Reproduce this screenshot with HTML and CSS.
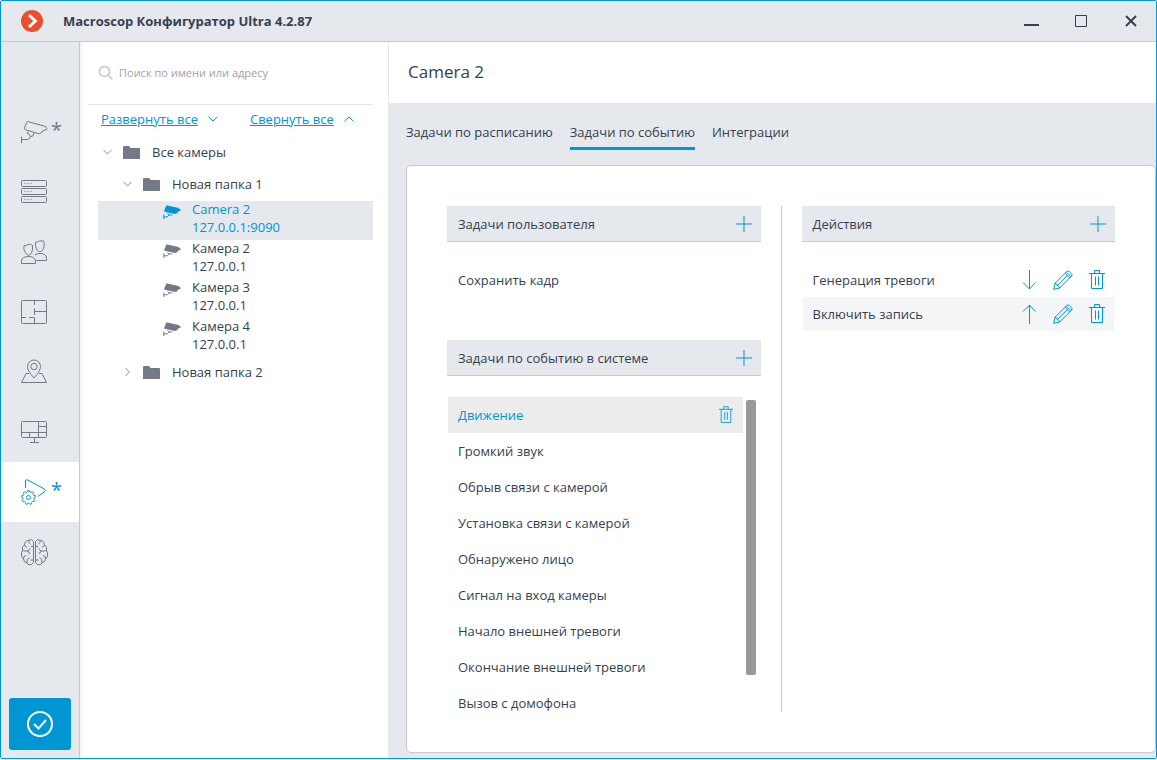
FILE: index.html
```html
<!DOCTYPE html>
<html lang="ru">
<head>
<meta charset="utf-8">
<title>Macroscop Конфигуратор Ultra 4.2.87</title>
<link rel="stylesheet" href="styles.css">
</head>
<body>
<svg class="sprite" aria-hidden="true">
  <symbol id="plus" viewBox="0 0 16 16"><path d="M8 0v16M0 8h16"/></symbol>
  <symbol id="trash" viewBox="0 0 16 20"><path d="M0 3.5h16M5.500 3.500V.5h5v3M2.500 3.500v15h11v-15M6.500 6.500v9M9.500 6.500v9"/></symbol>
  <symbol id="pencil" viewBox="0 0 20 20"><path d="M.7 19.300l1.300-6L13.800 1.500q1.200-1.200 2.500 0l2.200 2.200q1.200 1.200 0 2.500L6.700 18zM2 13.300q2 .2 2.200 2.300 2 .3 2.500 2.400M12 3.300l4.700 4.700M13.300 2l4.700 4.700M4.200 15.600L14.300 5.600"/></symbol>
  <symbol id="down" viewBox="0 0 14 20"><path d="M7.500 0v19M1 12.500L7.500 19l6-6.500"/></symbol>
  <symbol id="up" viewBox="0 0 14 20"><path d="M7.500 20V1M1 7.500L7.500 1l6 6.500"/></symbol>
  <symbol id="folder" viewBox="0 0 17 13"><path d="M0 13V1q0-1 1-1h5l1.500 2H16q1 0 1 1v10z"/></symbol>
  <symbol id="cam" viewBox="0 0 18 14"><path d="M3 1.200Q3.300.2 4.300.4L15.600 3l.7 1 1.300.6q.4 1-.5 1.500l-1.900.5-1 1.600-2.400.8-2.300-.5L1.700 6.800Q1 6.500 1.200 5.700z"/><path class="mount" d="M.8 9.500V14M.8 11.800h3.500l2-2 3 .2M4.500 8.500l1.800 1.500"/></symbol>
  <symbol id="chev-down" viewBox="0 0 10 6"><path d="M.5.7L5 5 9.500.7"/></symbol>
  <symbol id="chev-up" viewBox="0 0 10 6"><path d="M.5 5.300L5 1l4.500 4.300"/></symbol>
</svg>

<div class="window">
  <header class="titlebar">
    <svg class="logo" viewBox="0 0 22 22"><circle cx="11" cy="11" r="11"/><path d="M8 5l6.300 6L8 17"/></svg>
    <h1 class="title">Macroscop Конфигуратор Ultra 4.2.87</h1>
    <button class="win-btn" aria-label="Свернуть"><svg width="16" height="14"><path d="M1 11h15"/></svg></button>
    <button class="win-btn thin" aria-label="Развернуть"><svg width="12" height="12"><path d="M.5.5h11v11H.5z"/></svg></button>
    <button class="win-btn" aria-label="Закрыть"><svg width="12" height="12"><path d="M1 1l10 10M11 1L1 11"/></svg></button>
  </header>

  <div class="main">
    <nav class="rail">
      <button class="rail-item" aria-label="Камеры">
        <svg viewBox="0 0 28 28"><path d="M6.600 4.300q.3-.9 1.300-.7l17 4.700q1.200.3 1.400 1l.6 1.500q0 1-1 1.100l-3 .6q-.6 2-2 2.400l-2.400.8-13-4q-1.300-.4-1.100-1.500zM1.500 18.500v6.500M1.500 21.500h5.500q3-.1 3.500-3l2.500-.5 1-3M8.500 13.500l-1.500 1.700 2.500 1.300 1 2"/></svg>
        <span class="star">*</span>
      </button>
      <button class="rail-item" aria-label="Серверы">
        <svg viewBox="0 0 28 28"><rect x="1.500" y="2.500" width="25" height="6" rx="1"/><rect x="1.500" y="10.500" width="25" height="6" rx="1"/><rect x="1.500" y="18.500" width="25" height="6" rx="1"/><path d="M4.500 5.500h1m2 0h1m2 0h1M4.500 13.500h1m2 0h1m2 0h1M4.500 21.500h1m2 0h1m2 0h1"/></svg>
      </button>
      <button class="rail-item" aria-label="Пользователи">
        <svg viewBox="0 0 28 28"><path d="M1.500 25.500v-2.500q.4-4.500 7-4.500t7 4.500v2.500zM4 7.800q2 .2 4-1.400 2.500-.6 4.500.9.600 5-1 7.500-3 5-6 0-2.500-3.500-1.500-7M15.500 4.300q2.200 0 4.200-1.400 2.500-.3 4.300.6.900 5.500-1 8-3 4.500-6 .4-2.300-3.600-1.500-7.600M16.500 22.500h10v-2.500q-.4-4.500-6.500-4.500-3.200 0-5 1.500"/></svg>
      </button>
      <button class="rail-item" aria-label="Планы">
        <svg viewBox="0 0 28 28"><rect x="1.500" y="2.500" width="25" height="23" rx="1"/><path d="M14.500 2.500V7M14.500 10.500V17M14.500 13.500h12M1.500 19.500H6M9 19.500h5.500v6"/></svg>
      </button>
      <button class="rail-item" aria-label="Карты">
        <svg viewBox="0 0 28 28"><circle cx="14" cy="8.500" r="3.200"/><path d="M14 20Q7.500 13 7.500 8.500a6.500 6.500 0 0 1 13 0Q20.500 13 14 20zM9 15.500H6l-4.500 9h25l-4.500-9h-3"/></svg>
      </button>
      <button class="rail-item" aria-label="Рабочие места">
        <svg viewBox="0 0 28 28"><rect x="1.500" y="3.500" width="25" height="16" rx="1"/><path d="M18.500 3.500v16M18.500 8.500h8M1.500 14.500h25M9.500 14.500v5M14.500 19.500v5M10 24.500h9"/></svg>
      </button>
      <button class="rail-item active" aria-label="Сценарии">
        <svg viewBox="0 0 28 28"><path d="M5.500 10V3q.2-1.800 2-1.100L24.500 11q1.800 1.200.3 2.500l-7 5"/><circle cx="8.500" cy="19.500" r="2"/><path d="M7.500 14l.3-1.500h1.500l.3 1.500 1.500.5 1.200-1 1.200 1-.6 1.400.8 1.400 1.500.1.3 1.500-1.400.8-.2 1.500 1 1.200-.8 1.300-1.500-.3-1.200 1 0 1.500-1.400.5-1-1.200H8l-1 1.200-1.400-.5v-1.500l-1.200-1-1.500.3-.8-1.300 1-1.200-.2-1.500-1.400-.8.300-1.500 1.500-.1.800-1.400-.6-1.400 1.200-1 1.200 1z"/></svg>
        <span class="star">*</span>
      </button>
      <button class="rail-item" aria-label="Нейросети">
        <svg viewBox="0 0 28 28"><path d="M13.500 3.500v21q-1.500 3-4.500 2.200-1.500-.4-2-2-3.200 0-3.500-3.700Q.8 19 1.500 16q-.3-2 1-3.200Q1.500 8.500 4.500 7 5 2.500 9 2.300q3-2 4.500 1.200zM15.500 3.500v21q1.500 3 4.500 2.200 1.500-.4 2-2 3.200 0 3.500-3.700 2.700-2 2-5 .3-2-1-3.200 1-4.300-2-5.800Q24 2.500 20 2.300q-3-2-4.500 1.200zM4.500 7q.3 2 2.500 2M9 2.300q-1 2.500 1.500 3.700M10 10.500q-.5 2.500-3 2.500t-4.500-.2M7 13q2.500.5 2.500 3M3.500 21Q3 18 6 17.500M7 24.700q-.5-4.200 2.500-5M10.500 22h3M11 8.500h2.500M24.500 7q-.3 2-2.500 2M20 2.300q1 2.500-1.500 3.700M19 10.500q.5 2.500 3 2.500t4.500-.2M22 13q-2.500.5-2.500 3M25.500 21q.5-3-2.500-3.500M22 24.700q.5-4.200-2.500-5M18.500 22h-3M18 8.500h-2.500"/></svg>
      </button>
      <button class="apply" aria-label="Применить"><svg viewBox="0 0 28 28"><circle cx="14" cy="14" r="12"/><path d="M8 14l4.500 4.500L20 10"/></svg></button>
    </nav>

    <aside class="sidebar">
      <label class="search">
        <svg viewBox="0 0 14 14"><circle cx="5.500" cy="5.500" r="5"/><path d="M9 9l4.500 4.500"/></svg>
        <input type="text" placeholder="Поиск по имени или адресу" aria-label="Поиск по имени или адресу">
      </label>
      <div class="tree-tools">
        <a href="#">Развернуть все</a><svg class="chev"><use href="#chev-down"/></svg>
        <a href="#" class="second">Свернуть все</a><svg class="chev"><use href="#chev-up"/></svg>
      </div>
      <ul class="tree">
        <li class="folder"><svg class="toggle"><use href="#chev-down"/></svg><svg class="dir"><use href="#folder"/></svg>Все камеры</li>
        <li class="folder nested"><svg class="toggle"><use href="#chev-down"/></svg><svg class="dir"><use href="#folder"/></svg>Новая папка 1</li>
        <li class="camera selected"><svg class="cam"><use href="#cam"/></svg><div>Camera 2<br>127.0.0.1:9090</div></li>
        <li class="camera"><svg class="cam"><use href="#cam"/></svg><div>Камера 2<br>127.0.0.1</div></li>
        <li class="camera"><svg class="cam"><use href="#cam"/></svg><div>Камера 3<br>127.0.0.1</div></li>
        <li class="camera"><svg class="cam"><use href="#cam"/></svg><div>Камера 4<br>127.0.0.1</div></li>
        <li class="folder nested"><svg class="toggle closed"><use href="#chev-down"/></svg><svg class="dir"><use href="#folder"/></svg>Новая папка 2</li>
      </ul>
    </aside>

    <main class="content">
      <h2 class="heading">Camera 2</h2>
      <div class="body">
        <div class="tabs">
          <button class="tab">Задачи по расписанию</button>
          <button class="tab current">Задачи по событию</button>
          <button class="tab">Интеграции</button>
        </div>
        <div class="card">
          <section class="column">
            <div class="section-head">Задачи пользователя<button class="icon-btn" aria-label="Добавить задачу"><svg class="plus"><use href="#plus"/></svg></button></div>
            <ul class="user-tasks"><li class="task">Сохранить кадр</li></ul>
            <div class="section-head">Задачи по событию в системе<button class="icon-btn" aria-label="Добавить событие"><svg class="plus"><use href="#plus"/></svg></button></div>
            <div class="events">
              <ul class="event-list">
                <li class="task picked">Движение<button class="icon-btn" aria-label="Удалить"><svg class="trash small"><use href="#trash"/></svg></button></li>
                <li class="task">Громкий звук</li>
                <li class="task">Обрыв связи с камерой</li>
                <li class="task">Установка связи с камерой</li>
                <li class="task">Обнаружено лицо</li>
                <li class="task">Сигнал на вход камеры</li>
                <li class="task">Начало внешней тревоги</li>
                <li class="task">Окончание внешней тревоги</li>
                <li class="task">Вызов с домофона</li>
              </ul>
              <div class="track"><div class="thumb"></div></div>
            </div>
          </section>
          <div class="divider"></div>
          <section class="column">
            <div class="section-head">Действия<button class="icon-btn" aria-label="Добавить действие"><svg class="plus"><use href="#plus"/></svg></button></div>
            <ul class="actions">
              <li class="action">Генерация тревоги
                <button class="icon-btn" aria-label="Вниз"><svg class="arrow"><use href="#down"/></svg></button>
                <button class="icon-btn" aria-label="Изменить"><svg class="pencil"><use href="#pencil"/></svg></button>
                <button class="icon-btn" aria-label="Удалить"><svg class="trash"><use href="#trash"/></svg></button></li>
              <li class="action alt">Включить запись
                <button class="icon-btn" aria-label="Вверх"><svg class="arrow"><use href="#up"/></svg></button>
                <button class="icon-btn" aria-label="Изменить"><svg class="pencil"><use href="#pencil"/></svg></button>
                <button class="icon-btn" aria-label="Удалить"><svg class="trash"><use href="#trash"/></svg></button></li>
            </ul>
          </section>
        </div>
      </div>
    </main>
  </div>
</div>
</body>
</html>
```
FILE: styles.css
```css
:root {
  --accent: #0095d3;
  --ink: #363f4f;
  --slate: #737986;
  --panel: #e5e8ed;
  --line: #c8c9ce;
}
* { box-sizing: border-box; }
body {
  margin: 0;
  height: 100vh;
  padding-bottom: 1px;
  background: #fff;
  color: var(--ink);
  font: 13px/18px "Open Sans", "Noto Sans", sans-serif;
}
button { font: inherit; color: inherit; border: 0; background: none; padding: 0; }
ul { list-style: none; margin: 0; padding: 0; }
svg { fill: none; stroke: currentColor; flex: none; display: block; }
.sprite { position: absolute; width: 0; height: 0; }

.window {
  height: 100%;
  display: flex;
  flex-direction: column;
  border: 1px solid var(--accent);
  border-radius: 2px;
  overflow: hidden;
}
.titlebar {
  display: flex;
  align-items: center;
  height: 41px;
  padding-left: 20px;
  background: var(--panel);
  border-bottom: 1px solid var(--line);
}
.logo { width: 22px; height: 22px; }
.logo circle { fill: #e94e2d; stroke: none; }
.logo path { stroke: #fff; stroke-width: 3; }
.title { flex: 1; margin: 0 0 0 20px; font-size: 13px; font-weight: 700; }
.win-btn { width: 50px; height: 40px; display: grid; place-items: center; stroke-width: 2; }
.win-btn.thin { stroke-width: 1; }

.main { flex: 1; display: flex; min-height: 0; }
.rail {
  width: 79px;
  flex: none;
  display: flex;
  flex-direction: column;
  padding: 60px 0 8px;
  background: var(--panel);
  border-right: 1px solid var(--line);
  color: var(--slate);
}
.rail-item { display: flex; align-items: center; height: 60px; padding-left: 19px; }
.rail-item svg { width: 28px; height: 28px; }
.rail-item.active { background: #fff; color: var(--accent); }
.star { margin-left: 3px; padding-bottom: 5px; font-size: 20px; line-height: 28px; }
.apply {
  display: grid;
  place-items: center;
  height: 52px;
  margin: auto 8px 0;
  border-radius: 3px;
  background: var(--accent);
  color: #fff;
}
.apply svg { width: 28px; height: 28px; stroke-width: 2; }

.sidebar {
  width: 309px;
  flex: none;
  padding: 0 15px 0 8px;
  border-right: 1px solid var(--panel);
  box-shadow: inset 6px 0 6px -6px #0000001a;
}
.search {
  display: flex;
  align-items: center;
  height: 63px;
  padding-left: 11px;
  border-bottom: 1px solid var(--panel);
  color: #c3c6cc;
}
.search svg { width: 14px; height: 14px; stroke-width: 1.5; }
.search input {
  flex: 1;
  min-width: 0;
  border: 0;
  outline: 0;
  padding: 0;
  margin-left: 6px;
  background: none;
  font: 11px/18px "Open Sans", "Noto Sans", sans-serif;
}
.search input::placeholder { color: #a0a1a5; opacity: 1; }
.tree-tools {
  display: flex;
  align-items: center;
  height: 28px;
  padding-left: 13px;
  color: var(--accent);
}
.tree-tools a { color: inherit; }
.tree-tools .second { margin-left: 32px; }
.chev { width: 10px; height: 6px; margin-left: 10px; }
.tree { padding: 4px 0 0 10px; }
.folder { display: flex; align-items: center; height: 30px; margin-bottom: 2px; padding-left: 5px; }
.folder.nested { padding-left: 25px; }
.toggle { width: 9px; height: 6px; color: #bfc0c4; stroke-width: 1.5; }
.toggle.closed { transform: rotate(-90deg); }
.dir { width: 17px; height: 13px; margin: 0 12px 0 11px; fill: var(--slate); stroke: none; }
.camera { display: flex; height: 39px; padding-left: 65px; }
.camera div { margin-top: -1px; }
.cam { width: 18px; height: 14px; margin: 4px 11px 0 0; fill: var(--slate); stroke: none; }
.mount { fill: none; stroke: var(--slate); }
.selected { background: var(--panel); color: var(--accent); --slate: var(--accent); }

.content { flex: 1; min-width: 0; display: flex; flex-direction: column; }
.heading { margin: 0; height: 61px; padding-left: 19px; font-size: 17px; line-height: 60px; font-weight: 400; }
.body {
  flex: 1;
  min-height: 0;
  display: flex;
  flex-direction: column;
  padding: 16px 0 5px 17px;
  background: var(--panel);
}
.tabs { display: flex; gap: 17px; }
.tab { height: 31px; line-height: 26px; padding-bottom: 2px; border-bottom: 3px solid transparent; }
.tab.current { border-color: var(--accent); }
.card {
  flex: 1;
  min-height: 0;
  display: grid;
  grid-template-columns: minmax(0, 1fr) 1px minmax(0, 1fr);
  gap: 20px;
  margin-top: 15px;
  padding: 40px;
  background: #fff;
  border: 1px solid var(--line);
  border-radius: 5px;
}
.column { display: flex; flex-direction: column; min-height: 0; }
.divider { background: var(--line); }
.section-head {
  display: flex;
  align-items: center;
  flex: none;
  height: 36px;
  padding-left: 11px;
  background: var(--panel);
  border-bottom: 1px solid var(--line);
}
.icon-btn { width: 34px; height: 34px; display: grid; place-items: center; flex: none; color: var(--accent); }
.section-head .icon-btn, .task .icon-btn { margin-left: auto; }
.plus { width: 16px; height: 16px; }
.trash { width: 16px; height: 20px; }
.trash.small { width: 14px; height: 18px; }
.pencil { width: 20px; height: 20px; }
.arrow { width: 14px; height: 20px; }
.user-tasks { padding: 20px 0 42px; }
.task { display: flex; align-items: center; height: 36px; padding-left: 11px; }
.events { flex: 1; min-height: 0; display: flex; gap: 3px; margin-top: 21px; padding: 0 5px 0 1px; overflow: hidden; }
.event-list { flex: 1; }
.event-list .task { padding-left: 10px; }
.picked { background: #ececec; color: var(--accent); }
.track { width: 10px; padding-top: 3px; }
.thumb { height: 88%; border-radius: 2px; background: #999; }
.actions { padding: 21px 1px 0; }
.action { display: flex; align-items: center; height: 34px; padding-left: 10px; }
.action .icon-btn:first-of-type { margin-left: auto; }
.alt { background: #f4f5f7; }
```
